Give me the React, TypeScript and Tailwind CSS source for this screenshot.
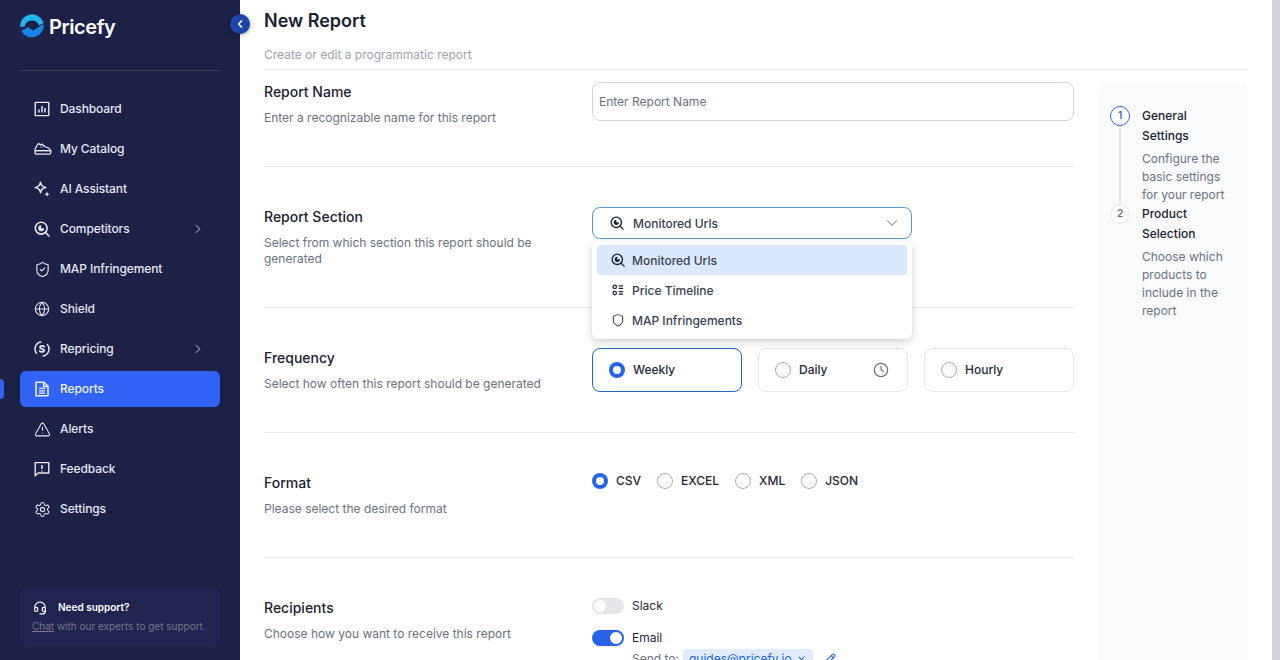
import type { ReactNode } from 'react'
import { AlertTriangle, ChevronDown, ChevronLeft, ChevronRight, Clock, Globe, Headset, Pencil, Settings, Shield, ShieldCheck, X } from 'lucide-react'

const font = { fontFamily: 'Inter, sans-serif' }

function Logo() {
  return (
    <svg width="24" height="24" viewBox="0 0 24 24" fill="none" className="shrink-0">
      <path d="M0.1 13A12 12 0 0 1 23.6 9L19 11.5A7.6 7.6 0 0 0 4.5 12.4Z" fill="#1fb6f2" />
      <path d="M1.2 17L8 13L13 16.5L23.7 10A12 12 0 0 1 1.2 17Z" fill="#1584e6" />
    </svg>
  )
}

function SearchChart({ size = 16, stroke = 'currentColor' }: { size?: number; stroke?: string }) {
  return (
    <svg width={size} height={size} viewBox="0 0 16 16" fill="none" stroke={stroke} strokeWidth="1.6" strokeLinecap="round">
      <circle cx="7.2" cy="7.2" r="5.9" />
      <path d="M11.6 11.6L15 15" />
      <path d="M7.2 4.2A3 3 0 1 0 10.2 7.2H7.2Z" fill={stroke} stroke="none" />
    </svg>
  )
}

function DashboardIcon() {
  return (
    <svg width="16" height="16" viewBox="0 0 16 16" fill="none" stroke="currentColor" strokeWidth="1.4">
      <rect x="1.2" y="1.4" width="13.6" height="13.2" rx="0.6" />
      <path d="M5 8.5V11.5M8 5V11.5M11 7V11.5" strokeWidth="1.5" />
    </svg>
  )
}

function ShoeIcon() {
  return (
    <svg width="18" height="16" viewBox="0 0 18 16" fill="none" stroke="currentColor" strokeWidth="1.25" strokeLinejoin="round">
      <path d="M1 8C2 6 3 3.8 4.6 2.6L6.6 4L8 3L10.5 5.2C12.5 6.6 16 6.4 16.6 9.6H1.2Z" />
      <path d="M1.2 9.6H16.8V11.6C16.8 12.6 16.2 13.2 15.2 13.2H2.6C1.6 13.2 1 12.6 1 11.6Z" />
      <path d="M6.4 5.6L7.6 6.6M8.4 4.8L9.6 5.8" strokeWidth="1" />
    </svg>
  )
}

function AiIcon() {
  return (
    <svg width="16" height="16" viewBox="0 0 16 16" fill="none" stroke="currentColor" strokeWidth="1.4" strokeLinejoin="round">
      <path d="M6.5 1.2C7 4.4 8.6 6 11.8 6.5C8.6 7 7 8.6 6.5 11.8C6 8.6 4.4 7 1.2 6.5C4.4 6 6 4.4 6.5 1.2Z" />
      <path d="M13 10.6L13.8 12.6L15.6 13.3L13.8 14L13 15.8L12.2 14L10.4 13.3L12.2 12.6Z" fill="currentColor" stroke="none" />
    </svg>
  )
}

function RepricingIcon() {
  return (
    <svg width="16" height="16" viewBox="0 0 16 16" fill="none" stroke="currentColor" strokeWidth="1.5" strokeLinecap="round">
      <path d="M2.6 12.4A7 7 0 0 1 6.8 1.1" />
      <path d="M13.4 3.6A7 7 0 0 1 9.2 14.9" />
      <path d="M10.2 5.8C9.4 4.6 6 4.6 5.9 6.3C5.8 8.2 10.2 7.5 10.2 9.6C10.1 11.3 6.5 11.2 5.7 10" strokeWidth="1.7" />
    </svg>
  )
}

function ReportIcon() {
  return (
    <svg width="16" height="16" viewBox="0 0 16 16" fill="none" stroke="currentColor" strokeWidth="1.5" strokeLinejoin="round">
      <path d="M2 1.2H10L14 5.2V14.8H2Z" />
      <path d="M5 7.4H11M5 9.8H11M5 12.2H11" strokeWidth="1.3" />
      <path d="M9.6 1.2V5.4H14" />
    </svg>
  )
}

function FeedbackIcon() {
  return (
    <svg width="16" height="16" viewBox="0 0 16 16" fill="none" stroke="currentColor" strokeWidth="1.4" strokeLinejoin="round">
      <path d="M1.2 1.6H14.8V12H4L1.2 14.8Z" />
      <path d="M8 4V8M8 9.4V10.4" strokeWidth="1.6" />
    </svg>
  )
}

function TimelineIcon() {
  return (
    <svg width="12" height="12" viewBox="0 0 14 14" fill="none" stroke="currentColor" strokeWidth="1.4">
      <circle cx="3.2" cy="3.4" r="2" />
      <circle cx="3.2" cy="10.6" r="2" />
      <path d="M7.8 2.2H13M7.8 5.2H13M7.8 8.8H13M7.8 11.8H13" />
    </svg>
  )
}

const navItems: { label: string; icon: ReactNode; arrow?: boolean; active?: boolean }[] = [
  { label: 'Dashboard', icon: <DashboardIcon /> },
  { label: 'My Catalog', icon: <ShoeIcon /> },
  { label: 'AI Assistant', icon: <AiIcon /> },
  { label: 'Competitors', icon: <SearchChart /> , arrow: true },
  { label: 'MAP Infringement', icon: <ShieldCheck size={17} strokeWidth={1.6} /> },
  { label: 'Shield', icon: <Globe size={16} strokeWidth={1.6} /> },
  { label: 'Repricing', icon: <RepricingIcon />, arrow: true },
  { label: 'Reports', icon: <ReportIcon />, active: true },
  { label: 'Alerts', icon: <AlertTriangle size={17} strokeWidth={1.5} /> },
  { label: 'Feedback', icon: <FeedbackIcon /> },
  { label: 'Settings', icon: <Settings size={17} strokeWidth={1.5} /> },
]

function Sidebar() {
  return (
    <aside className="relative flex h-[660px] w-[240px] shrink-0 flex-col bg-[#1e2147] px-5">
      <div className="flex h-[71px] shrink-0 items-start gap-[5px] border-b border-[#3b3e5f] pt-[14px]">
        <Logo />
        <span className="text-[20px] leading-[26px] font-semibold tracking-[-0.4px] text-white">Pricefy</span>
      </div>
      <button className="absolute top-[14px] -right-[10px] z-10 flex h-5 w-5 items-center justify-center rounded-full bg-[#1c45ac] text-white shadow-[0_1px_4px_rgba(0,0,0,0.4)]">
        <ChevronLeft size={12} strokeWidth={3.5} />
      </button>
      <nav className="mt-5 flex flex-col gap-1">
        {navItems.map(item => (
          <div key={item.label} className={`relative flex h-9 items-center rounded-md px-3 text-xs font-medium tracking-[-0.1px] ${item.active ? 'bg-[#2f62f5] text-[#f0f4ff]' : 'text-[#e4e7f2]'}`}>
            {item.active && <span className="absolute top-2 -left-5 h-5 w-1 rounded-r bg-[#2f62f5]" />}
            <span className="flex w-[28px] shrink-0 items-center justify-start pl-[2px]">{item.icon}</span>
            <span>{item.label}</span>
            {item.arrow && <ChevronRight size={14} className="mr-[3px] ml-auto text-[#7e8199]" />}
          </div>
        ))}
      </nav>
      <div className="mt-auto mb-[13px] flex h-[60px] flex-col justify-center rounded-lg bg-[#212450] px-3">
        <div className="flex items-center gap-[11px] pl-px">
          <Headset size={14} strokeWidth={2} className="text-white" />
          <span className="text-[10px] font-semibold text-white">Need support?</span>
        </div>
        <p className="mt-[4px] text-[10px] whitespace-nowrap text-[#74778f]">
          <span className="underline">Chat</span> with our experts to get support.
        </p>
      </div>
    </aside>
  )
}

function Radio({ on }: { on?: boolean }) {
  return on ? (
    <span className="h-4 w-4 shrink-0 rounded-full border-[4.5px] border-[#2563eb] bg-white" />
  ) : (
    <span className="h-4 w-4 shrink-0 rounded-full border border-[#a9adb5] bg-[#f9fafb]" />
  )
}

function Section({ title, desc, children, className }: { title: string; desc: string; children: ReactNode; className: string }) {
  return (
    <section className={`flex border-b border-[#e5e7eb] ${className}`}>
      <div className="w-[328px] shrink-0 pr-[30px]">
        <h3 className="text-sm leading-5 font-medium text-[#1c2230]">{title}</h3>
        <p className="mt-[8px] text-xs leading-4 text-[#6b7280]">{desc}</p>
      </div>
      <div className="min-w-0 flex-1">{children}</div>
    </section>
  )
}

function FreqCard({ label, on, clock }: { label: string; on?: boolean; clock?: boolean }) {
  return (
    <div className={`flex h-11 w-[150px] items-center gap-2 rounded-lg border px-4 text-xs font-medium text-[#1f2937] ${on ? 'border-[#1f66d1]' : 'border-[#e5e7eb]'}`}>
      <Radio on={on} />
      <span>{label}</span>
      {clock && <Clock size={16} strokeWidth={1.8} className="mr-[2px] ml-auto text-[#6b7280]" />}
    </div>
  )
}

function Option({ label, icon, active }: { label: string; icon: ReactNode; active?: boolean }) {
  return (
    <div className={`flex h-[30px] items-center gap-[7px] rounded pl-[14px] text-xs font-medium text-[#374151] ${active ? 'bg-[#dbe9fe]' : ''}`}>
      <span className="flex w-[14px] justify-center text-[#1f2937]">{icon}</span>
      <span className="pt-px">{label}</span>
    </div>
  )
}

function Stepper() {
  return (
    <aside className="h-[578px] w-[150px] shrink-0 rounded-t-lg bg-[#fafbfd] pt-6 pl-3 text-xs">
      <div className="relative flex gap-3">
        <span className="absolute top-5 bottom-0 left-[9px] w-[2px] bg-[#e5e7eb]" />
        <span className="z-10 flex h-5 w-5 shrink-0 items-center justify-center rounded-full border-[1.5px] border-[#3f63d8] bg-white text-[10px] font-semibold text-[#3f63d8]">1</span>
        <div>
          <div className="leading-5 font-medium text-[#1c2230]">General<br />Settings</div>
          <p className="mt-[4px] leading-[18px] text-[#6b7280]">Configure the<br />basic settings<br />for your report</p>
        </div>
      </div>
      <div className="flex gap-3">
        <span className="flex h-5 w-5 shrink-0 items-center justify-center rounded-full border border-[#e5e7eb] bg-white text-[10px] font-semibold text-[#6b7280]">2</span>
        <div>
          <div className="leading-5 font-medium text-[#1c2230]">Product<br />Selection</div>
          <p className="mt-[4px] leading-[18px] text-[#6b7280]">Choose which<br />products to<br />include in the<br />report</p>
        </div>
      </div>
    </aside>
  )
}

export default function App() {
  return (
    <div className="flex h-[660px] overflow-hidden bg-white" style={font}>
      <Sidebar />
      <main className="min-w-0 flex-1 pl-6">
        <header className="mr-[24px] h-[70px] border-b border-[#f0f1f3] pt-[10px]">
          <h1 className="text-lg leading-[22px] font-semibold text-[#1c2230]">New Report</h1>
          <p className="mt-[15px] text-xs leading-4 text-[#9ca3af]">Create or edit a programmatic report</p>
        </header>
        <div className="flex gap-6">
          <div className="h-[590px] w-[810px] shrink-0 overflow-hidden">
            <Section title="Report Name" desc="Enter a recognizable name for this report" className="h-[97px] pt-3">
              <input placeholder="Enter Report Name" className="h-[39px] w-[482px] rounded-lg border border-[#d1d5db] px-[6px] text-xs outline-none placeholder:text-[#6b7280]" />
            </Section>
            <Section title="Report Section" desc="Select from which section this report should be generated" className="h-[141px] pt-10">
              <div className="relative w-[320px]">
                <div className="flex h-8 items-center gap-[9px] rounded-lg border border-[#5f97c9] pr-[10px] pl-[17px] text-xs font-medium text-[#374151]">
                  <span className="text-[#1f2937]"><SearchChart size={14} /></span>
                  <span className="pt-px">Monitored Urls</span>
                  <ChevronDown size={18} strokeWidth={1.5} className="ml-auto text-[#a0a5ae]" />
                </div>
                <div className="absolute top-[35px] left-0 z-20 w-[320px] rounded-md bg-white px-[5px] pt-[3px] pb-[4px] shadow-[0_3px_8px_rgba(0,0,0,0.18)]">
                  <Option active label="Monitored Urls" icon={<SearchChart size={14} />} />
                  <Option label="Price Timeline" icon={<TimelineIcon />} />
                  <Option label="MAP Infringements" icon={<Shield size={16} strokeWidth={1.7} />} />
                </div>
              </div>
            </Section>
            <Section title="Frequency" desc="Select how often this report should be generated" className="h-[125px] pt-10">
              <div className="flex gap-4">
                <FreqCard label="Weekly" on />
                <FreqCard label="Daily" clock />
                <FreqCard label="Hourly" />
              </div>
            </Section>
            <Section title="Format" desc="Please select the desired format" className="h-[125px] pt-10">
              <div className="flex items-center gap-4 text-xs font-medium text-[#1f2937]">
                {['CSV', 'EXCEL', 'XML', 'JSON'].map((f, i) => (
                  <label key={f} className="flex items-center gap-2">
                    <Radio on={i === 0} />
                    <span>{f}</span>
                  </label>
                ))}
              </div>
            </Section>
            <section className="flex pt-10">
              <div className="w-[328px] shrink-0 pr-[30px]">
                <h3 className="text-sm leading-5 font-medium text-[#1c2230]">Recipients</h3>
                <p className="mt-[8px] text-xs leading-4 text-[#6b7280]">Choose how you want to receive this report</p>
              </div>
              <div className="text-xs text-[#1f2937]">
                <div className="flex h-4 items-center gap-2">
                  <span className="flex h-4 w-8 items-center rounded-full bg-[#e5e7eb] px-[2px]"><span className="h-3 w-3 rounded-full bg-white" /></span>
                  <span>Slack</span>
                </div>
                <div className="mt-4 flex h-4 items-center gap-2">
                  <span className="flex h-4 w-8 items-center justify-end rounded-full bg-[#2563eb] px-[2px]"><span className="h-3 w-3 rounded-full bg-white" /></span>
                  <span>Email</span>
                </div>
                <div className="mt-[3px] flex items-center gap-1 pl-10">
                  <span className="text-[#6b7280]">Send to:</span>
                  <span className="flex items-center gap-1 rounded bg-[#e0ecfd] px-[6px] leading-5 text-[#2563eb]">guides@pricefy.io <X size={11} strokeWidth={2.2} /></span>
                  <Pencil size={13} strokeWidth={2} className="ml-[6px] text-[#2563eb]" />
                </div>
              </div>
            </section>
          </div>
          <div className="pt-3"><Stepper /></div>
        </div>
      </main>
      <div className="h-[660px] w-2 shrink-0 bg-[#d1d5db]" />
    </div>
  )
}
